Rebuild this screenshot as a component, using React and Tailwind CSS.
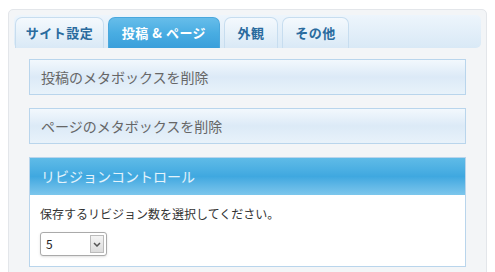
import React from "react";

const font = { fontFamily: '"Noto Sans CJK JP", "Noto Sans", sans-serif' };

function Tab({ label, active, w }) {
  return (
    <div
      className={
        "h-[31px] flex items-center justify-center rounded-t-[7px] border border-b-0 text-[13px] font-bold tracking-[0.5px] " +
        w +
        (active
          ? " border-[#4aa8dd] bg-gradient-to-b from-[#66bdea] via-[#49ade2] to-[#3a9fdb] text-white"
          : " border-[#c7ddef] bg-gradient-to-b from-[#f4f9fd] to-[#d9e9f6] text-[#2a6b9e]")
      }
    >
      {label}
    </div>
  );
}

function Box({ title }) {
  return (
    <div className="h-[36px] flex items-center px-[11px] border border-[#b9d5ec] bg-gradient-to-b from-[#f2f8fd] via-[#dceaf7] to-[#e8f2fa] text-[14px] text-[#666]">
      {title}
    </div>
  );
}

export default function App() {
  return (
    <div className="w-[495px] h-[272px] bg-white overflow-hidden pt-[9px] pl-[8px]" style={font}>
      <div className="w-[479px] h-[280px] rounded-[5px] border border-[#e3e6ea] bg-[#f3f5f7] p-[5px]">
        <div className="h-[33px] rounded-[5px] bg-gradient-to-b from-[#edf5fc] to-[#d9e9f6] flex items-end gap-[4px] pl-[1px]">
          <Tab label="サイト設定" w="w-[89px]" />
          <Tab label="投稿 & ページ" w="w-[112px]" active />
          <Tab label="外観" w="w-[54px]" />
          <Tab label="その他" w="w-[67px]" />
        </div>
        <div className="pl-[15px] pr-[15px] pt-[11px] flex flex-col gap-[13px]">
          <Box title="投稿のメタボックスを削除" />
          <Box title="ページのメタボックスを削除" />
          <div className="border border-[#b9d5ec]">
            <div className="h-[37px] flex items-center px-[11px] bg-gradient-to-b from-[#5fbbe7] via-[#3fa8e0] to-[#7cc6ec] text-[14px] text-white/85">
              リビジョンコントロール
            </div>
            <div className="bg-white px-[10px] pt-[10px] pb-[10px]">
              <div className="text-[12px] text-[#333]">保存するリビジョン数を選択してください。</div>
              <div className="mt-[9px] w-[67px] h-[24px] rounded-[3px] border border-[#aaa] bg-white flex items-center justify-between pl-[5px] pr-[2px] text-[12px] text-[#222] shadow-sm">
                <span>5</span>
                <span className="w-[14px] h-[18px] border border-[#bbb] bg-gradient-to-b from-[#f4f4f4] to-[#dcdcdc] flex items-center justify-center">
                  <svg width="8" height="5" viewBox="0 0 8 5">
                    <path d="M1 1 L4 4 L7 1" stroke="#555" strokeWidth="1.5" fill="none" />
                  </svg>
                </span>
              </div>
            </div>
          </div>
        </div>
      </div>
    </div>
  );
}
